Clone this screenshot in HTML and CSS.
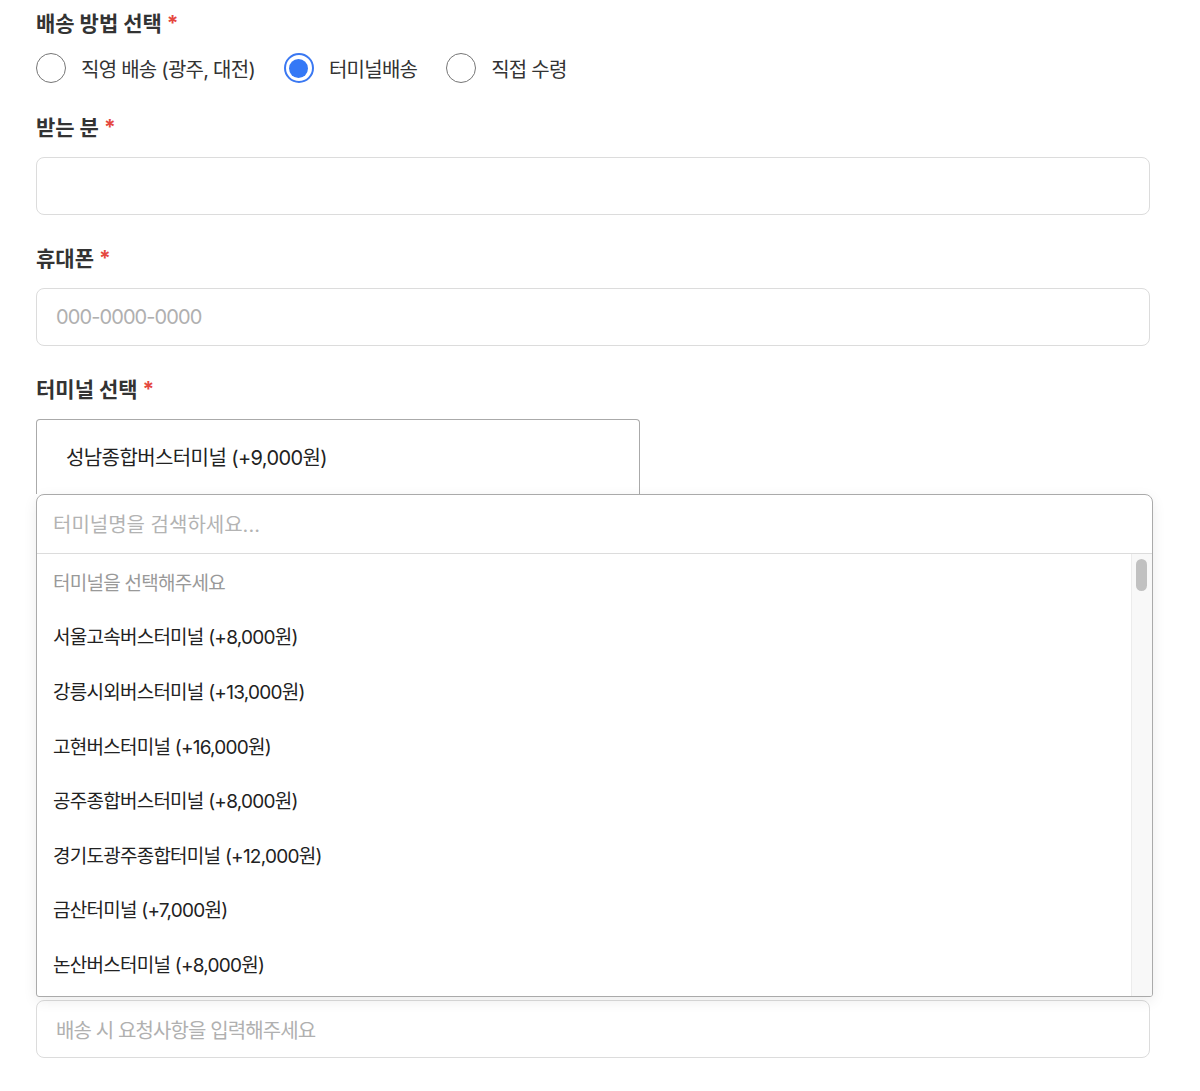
FILE: index.html
```html
<!DOCTYPE html>
<html lang="ko">
<head>
<meta charset="utf-8">
<title>배송 정보</title>
<link rel="stylesheet" href="styles.css">
</head>
<body>
<form class="form">
  <div class="group">
    <div class="label">배송 방법 선택 <span class="req">*</span></div>
    <div class="radios">
      <label class="radio"><span class="circle"></span><span class="rtext">직영 배송 (광주, 대전)</span></label>
      <label class="radio"><span class="circle checked"></span><span class="rtext">터미널배송</span></label>
      <label class="radio"><span class="circle"></span><span class="rtext">직접 수령</span></label>
    </div>
  </div>
  <div class="group">
    <div class="label">받는 분 <span class="req">*</span></div>
    <div class="input"></div>
  </div>
  <div class="group">
    <div class="label">휴대폰 <span class="req">*</span></div>
    <div class="input"><span class="ph">000-0000-0000</span></div>
  </div>
  <div class="group terminal">
    <div class="label">터미널 선택 <span class="req">*</span></div>
    <div class="select-wrap">
      <div class="selection">성남종합버스터미널 (+9,000원)</div>
      <div class="dropdown">
        <div class="search"><span class="ph2">터미널명을 검색하세요...</span></div>
        <div class="results">
          <ul class="options">
            <li class="opt muted">터미널을 선택해주세요</li>
            <li class="opt">서울고속버스터미널 (+8,000원)</li>
            <li class="opt">강릉시외버스터미널 (+13,000원)</li>
            <li class="opt">고현버스터미널 (+16,000원)</li>
            <li class="opt">공주종합버스터미널 (+8,000원)</li>
            <li class="opt">경기도광주종합터미널 (+12,000원)</li>
            <li class="opt">금산터미널 (+7,000원)</li>
            <li class="opt">논산버스터미널 (+8,000원)</li>
          </ul>
          <div class="scrollbar"><div class="thumb"></div></div>
        </div>
      </div>
    </div>
  </div>
  <div class="group request">
    <div class="input"><span class="ph">배송 시 요청사항을 입력해주세요</span></div>
  </div>
</form>
</body>
</html>
```
FILE: styles.css
```css
* { box-sizing: border-box; }
html, body { margin: 0; padding: 0; background: #fff; }
body {
  font-family: Inter, "Noto Sans CJK KR", sans-serif;
  color: #333;
}
.form {
  width: 1150px;
  padding: 9px 0 0 36px;
  display: flex;
  flex-direction: column;
  gap: 29px;
}
.label {
  font-size: 21px;
  font-weight: 700;
  line-height: 30px;
  color: #333;
  margin-bottom: 14px;
}
.req { color: #e5483f; }
.radios {
  display: flex;
  gap: 29px;
  height: 30px;
  margin-bottom: 1px;
}
.radio {
  display: flex;
  align-items: center;
  gap: 15px;
}
.circle {
  width: 30px;
  height: 30px;
  border-radius: 50%;
  border: 1.5px solid #767676;
  display: flex;
  align-items: center;
  justify-content: center;
}
.circle.checked { border: 2px solid #3a78f2; }
.circle.checked::after {
  content: "";
  width: 19px;
  height: 19px;
  border-radius: 50%;
  background: #3478f6;
}
.rtext {
  font-size: 20px;
  color: #333;
  letter-spacing: -0.75px;
}
.input {
  height: 58px;
  border: 1px solid #dcdcdc;
  border-radius: 8px;
  display: flex;
  align-items: center;
  padding-left: 19px;
}
.ph {
  font-size: 20px;
  color: #b0b0b0;
  letter-spacing: -0.9px;
}
.select-wrap { position: relative; }
.selection {
  width: 604px;
  height: 75px;
  border: 1px solid #aaa;
  border-bottom: none;
  border-radius: 4px 4px 0 0;
  display: flex;
  align-items: center;
  padding: 0 0 2px 29px;
  font-size: 20px;
  color: #222;
  letter-spacing: -0.6px;
}
.dropdown {
  position: absolute;
  left: 0;
  top: 75px;
  width: 1117px;
  height: 503px;
  background: #fff;
  border: 1px solid #aaa;
  border-radius: 8px 8px 3px 3px;
  box-shadow: 0 4px 14px rgba(0,0,0,0.08);
  display: flex;
  flex-direction: column;
  overflow: hidden;
  z-index: 10;
}
.search {
  height: 59px;
  flex: none;
  border-bottom: 1px solid #dcdcdc;
  display: flex;
  align-items: center;
  padding: 0 0 2px 16px;
}
.ph2 {
  font-size: 20px;
  color: #b3b3b3;
  letter-spacing: 0;
}
.results {
  flex: 1;
  display: flex;
  min-height: 0;
}
.options {
  flex: 1;
  list-style: none;
  margin: 0;
  padding: 0;
  overflow: hidden;
}
.opt {
  height: 54.6px;
  display: flex;
  align-items: center;
  padding-left: 16px;
  font-size: 19px;
  color: #222;
  letter-spacing: -0.75px;
}
.opt.muted { color: #999; }
.scrollbar {
  width: 21px;
  flex: none;
  background: #f8f8f8;
  border-left: 1px solid #ececec;
  padding: 5px 0 0 4px;
}
.thumb {
  width: 11px;
  height: 32px;
  border-radius: 6px;
  background: #c1c1c1;
}
.request { margin-top: 477px; }
```
